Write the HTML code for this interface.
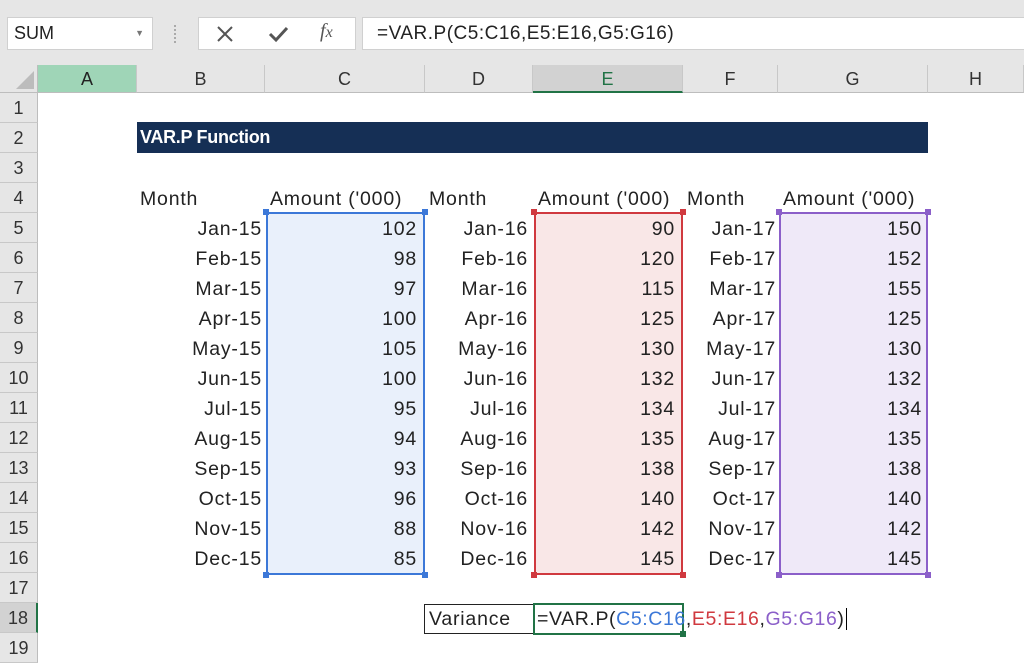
<!DOCTYPE html>
<html><head><meta charset="utf-8"><style>
*{margin:0;padding:0;box-sizing:border-box}
body{width:1024px;height:665px;position:relative;overflow:hidden;background:#fff;font-family:"Liberation Sans",sans-serif;color:#222}
.a{position:absolute}
.top{left:0;top:0;width:1024px;height:65px;background:#e6e6e6}
.box{background:#fff;border:1px solid #d0d0d0}
.ch{top:65px;height:28px;background:#e6e6e6;border-right:1px solid #c8c8c8;border-bottom:1px solid #bdbdbd;font-size:18px;text-align:center;line-height:28px;color:#333}
.rh{left:0;width:38px;height:30px;background:#e6e6e6;border-bottom:1px solid #c8c8c8;border-right:1px solid #bdbdbd;font-size:18px;text-align:center;line-height:30px;color:#333}
.t{font-size:19.5px;letter-spacing:0.8px;line-height:30px;height:30px;white-space:nowrap}
.r{text-align:right}
.B{left:137px;width:125px}.C{left:265px;width:152px}.D{left:425px;width:103px}.E{left:533px;width:142px}.F{left:683px;width:93px}.G{left:778px;width:144px}
.h{position:absolute;width:6px;height:6px}
</style></head><body>
<div class="a top"></div>
<div class="a box" style="left:7px;top:17px;width:146px;height:33px;font-size:18px;line-height:31px;padding-left:6px">SUM<span style="position:absolute;right:8px;top:0;font-size:9px;color:#777">&#9660;</span></div>
<div class="a" style="left:174px;top:25px;width:3px;height:18px;border-left:2px dotted #aaa"></div>
<div class="a box" style="left:198px;top:17px;width:158px;height:33px"></div>
<svg class="a" style="left:215px;top:24px" width="20" height="20"><path d="M3 3L17 17M17 3L3 17" stroke="#555" stroke-width="2"/></svg>
<svg class="a" style="left:268px;top:24px" width="22" height="20"><path d="M2 10L8 16L19 4" stroke="#555" stroke-width="3" fill="none"/></svg>
<div class="a" style="left:320px;top:20px;font-family:'Liberation Serif',serif;font-style:italic;font-size:20px;color:#555">f<span style="font-size:16px">x</span></div>
<div class="a box" style="left:362px;top:17px;width:670px;height:33px;font-size:19px;letter-spacing:0.5px;line-height:31px;padding-left:14px">=VAR.P(C5:C16,E5:E16,G5:G16)</div>
<div class="a" style="left:0;top:65px;width:38px;height:28px;background:#e6e6e6;border-right:1px solid #bdbdbd;border-bottom:1px solid #bdbdbd"></div>
<svg class="a" style="left:14px;top:69px" width="22" height="22"><path d="M20 2L20 20L2 20Z" fill="#bcbcbc"/></svg>
<div class="a ch" style="left:38px;width:99px;background:#9fd5b7;color:#222">A</div>
<div class="a ch" style="left:137px;width:128px">B</div>
<div class="a ch" style="left:265px;width:160px">C</div>
<div class="a ch" style="left:425px;width:108px">D</div>
<div class="a ch" style="left:533px;width:150px;background:#d2d2d2;border-bottom:2px solid #217346;color:#217346">E</div>
<div class="a ch" style="left:683px;width:95px">F</div>
<div class="a ch" style="left:778px;width:150px">G</div>
<div class="a ch" style="left:928px;width:96px">H</div>
<div class="a rh" style="top:93px">1</div><div class="a rh" style="top:123px">2</div><div class="a rh" style="top:153px">3</div><div class="a rh" style="top:183px">4</div><div class="a rh" style="top:213px">5</div><div class="a rh" style="top:243px">6</div><div class="a rh" style="top:273px">7</div><div class="a rh" style="top:303px">8</div><div class="a rh" style="top:333px">9</div><div class="a rh" style="top:363px">10</div><div class="a rh" style="top:393px">11</div><div class="a rh" style="top:423px">12</div><div class="a rh" style="top:453px">13</div><div class="a rh" style="top:483px">14</div><div class="a rh" style="top:513px">15</div><div class="a rh" style="top:543px">16</div><div class="a rh" style="top:573px">17</div><div class="a rh" style="top:603px;background:#d2d2d2;border-right:2px solid #217346">18</div><div class="a rh" style="top:633px">19</div>
<div class="a" style="left:137px;top:122px;width:791px;height:31px;background:#152f55;color:#fff;font-weight:bold;font-size:18px;line-height:31px;padding-left:3px;letter-spacing:-0.3px">VAR.P Function</div>
<div class="a" style="left:266px;top:212px;width:159px;height:363px;background:#e9f0fb;border:2px solid #3c78d8"></div>
<div class="a" style="left:534px;top:212px;width:149px;height:363px;background:#f9e7e7;border:2px solid #d0393f"></div>
<div class="a" style="left:779px;top:212px;width:149px;height:363px;background:#efe9f8;border:2px solid #8b5fc9"></div>
<div class="h" style="left:263px;top:209px;background:#3c78d8"></div><div class="h" style="left:422px;top:209px;background:#3c78d8"></div><div class="h" style="left:263px;top:572px;background:#3c78d8"></div><div class="h" style="left:422px;top:572px;background:#3c78d8"></div>
<div class="h" style="left:531px;top:209px;background:#d0393f"></div><div class="h" style="left:680px;top:209px;background:#d0393f"></div><div class="h" style="left:531px;top:572px;background:#d0393f"></div><div class="h" style="left:680px;top:572px;background:#d0393f"></div>
<div class="h" style="left:776px;top:209px;background:#8b5fc9"></div><div class="h" style="left:925px;top:209px;background:#8b5fc9"></div><div class="h" style="left:776px;top:572px;background:#8b5fc9"></div><div class="h" style="left:925px;top:572px;background:#8b5fc9"></div>
<div class="a t" style="left:140px;top:184px">Month</div><div class="a t" style="left:270px;top:184px">Amount ('000)</div>
<div class="a t" style="left:429px;top:184px">Month</div><div class="a t" style="left:538px;top:184px">Amount ('000)</div>
<div class="a t" style="left:687px;top:184px">Month</div><div class="a t" style="left:783px;top:184px">Amount ('000)</div>
<div class="a t r B" style="top:214px">Jan-15</div><div class="a t r C" style="top:214px">102</div><div class="a t r D" style="top:214px">Jan-16</div><div class="a t r E" style="top:214px">90</div><div class="a t r F" style="top:214px">Jan-17</div><div class="a t r G" style="top:214px">150</div>
<div class="a t r B" style="top:244px">Feb-15</div><div class="a t r C" style="top:244px">98</div><div class="a t r D" style="top:244px">Feb-16</div><div class="a t r E" style="top:244px">120</div><div class="a t r F" style="top:244px">Feb-17</div><div class="a t r G" style="top:244px">152</div>
<div class="a t r B" style="top:274px">Mar-15</div><div class="a t r C" style="top:274px">97</div><div class="a t r D" style="top:274px">Mar-16</div><div class="a t r E" style="top:274px">115</div><div class="a t r F" style="top:274px">Mar-17</div><div class="a t r G" style="top:274px">155</div>
<div class="a t r B" style="top:304px">Apr-15</div><div class="a t r C" style="top:304px">100</div><div class="a t r D" style="top:304px">Apr-16</div><div class="a t r E" style="top:304px">125</div><div class="a t r F" style="top:304px">Apr-17</div><div class="a t r G" style="top:304px">125</div>
<div class="a t r B" style="top:334px">May-15</div><div class="a t r C" style="top:334px">105</div><div class="a t r D" style="top:334px">May-16</div><div class="a t r E" style="top:334px">130</div><div class="a t r F" style="top:334px">May-17</div><div class="a t r G" style="top:334px">130</div>
<div class="a t r B" style="top:364px">Jun-15</div><div class="a t r C" style="top:364px">100</div><div class="a t r D" style="top:364px">Jun-16</div><div class="a t r E" style="top:364px">132</div><div class="a t r F" style="top:364px">Jun-17</div><div class="a t r G" style="top:364px">132</div>
<div class="a t r B" style="top:394px">Jul-15</div><div class="a t r C" style="top:394px">95</div><div class="a t r D" style="top:394px">Jul-16</div><div class="a t r E" style="top:394px">134</div><div class="a t r F" style="top:394px">Jul-17</div><div class="a t r G" style="top:394px">134</div>
<div class="a t r B" style="top:424px">Aug-15</div><div class="a t r C" style="top:424px">94</div><div class="a t r D" style="top:424px">Aug-16</div><div class="a t r E" style="top:424px">135</div><div class="a t r F" style="top:424px">Aug-17</div><div class="a t r G" style="top:424px">135</div>
<div class="a t r B" style="top:454px">Sep-15</div><div class="a t r C" style="top:454px">93</div><div class="a t r D" style="top:454px">Sep-16</div><div class="a t r E" style="top:454px">138</div><div class="a t r F" style="top:454px">Sep-17</div><div class="a t r G" style="top:454px">138</div>
<div class="a t r B" style="top:484px">Oct-15</div><div class="a t r C" style="top:484px">96</div><div class="a t r D" style="top:484px">Oct-16</div><div class="a t r E" style="top:484px">140</div><div class="a t r F" style="top:484px">Oct-17</div><div class="a t r G" style="top:484px">140</div>
<div class="a t r B" style="top:514px">Nov-15</div><div class="a t r C" style="top:514px">88</div><div class="a t r D" style="top:514px">Nov-16</div><div class="a t r E" style="top:514px">142</div><div class="a t r F" style="top:514px">Nov-17</div><div class="a t r G" style="top:514px">142</div>
<div class="a t r B" style="top:544px">Dec-15</div><div class="a t r C" style="top:544px">85</div><div class="a t r D" style="top:544px">Dec-16</div><div class="a t r E" style="top:544px">145</div><div class="a t r F" style="top:544px">Dec-17</div><div class="a t r G" style="top:544px">145</div>
<div class="a" style="left:424px;top:604px;width:110px;height:30px;border:1px solid #222"></div>
<div class="a t" style="left:429px;top:604px">Variance</div>
<div class="a" style="left:533px;top:603px;width:151px;height:32px;border:2px solid #217346"></div>
<div class="a" style="left:680px;top:631px;width:6px;height:6px;background:#217346"></div>
<div class="a t" style="left:537px;top:604px;letter-spacing:0.6px">=VAR.P(<span style="color:#3c78d8">C5:C16</span>,<span style="color:#d0393f">E5:E16</span>,<span style="color:#8b5fc9">G5:G16</span>)<span style="border-left:1px solid #000;margin-left:1px"></span></div>
</body></html>
